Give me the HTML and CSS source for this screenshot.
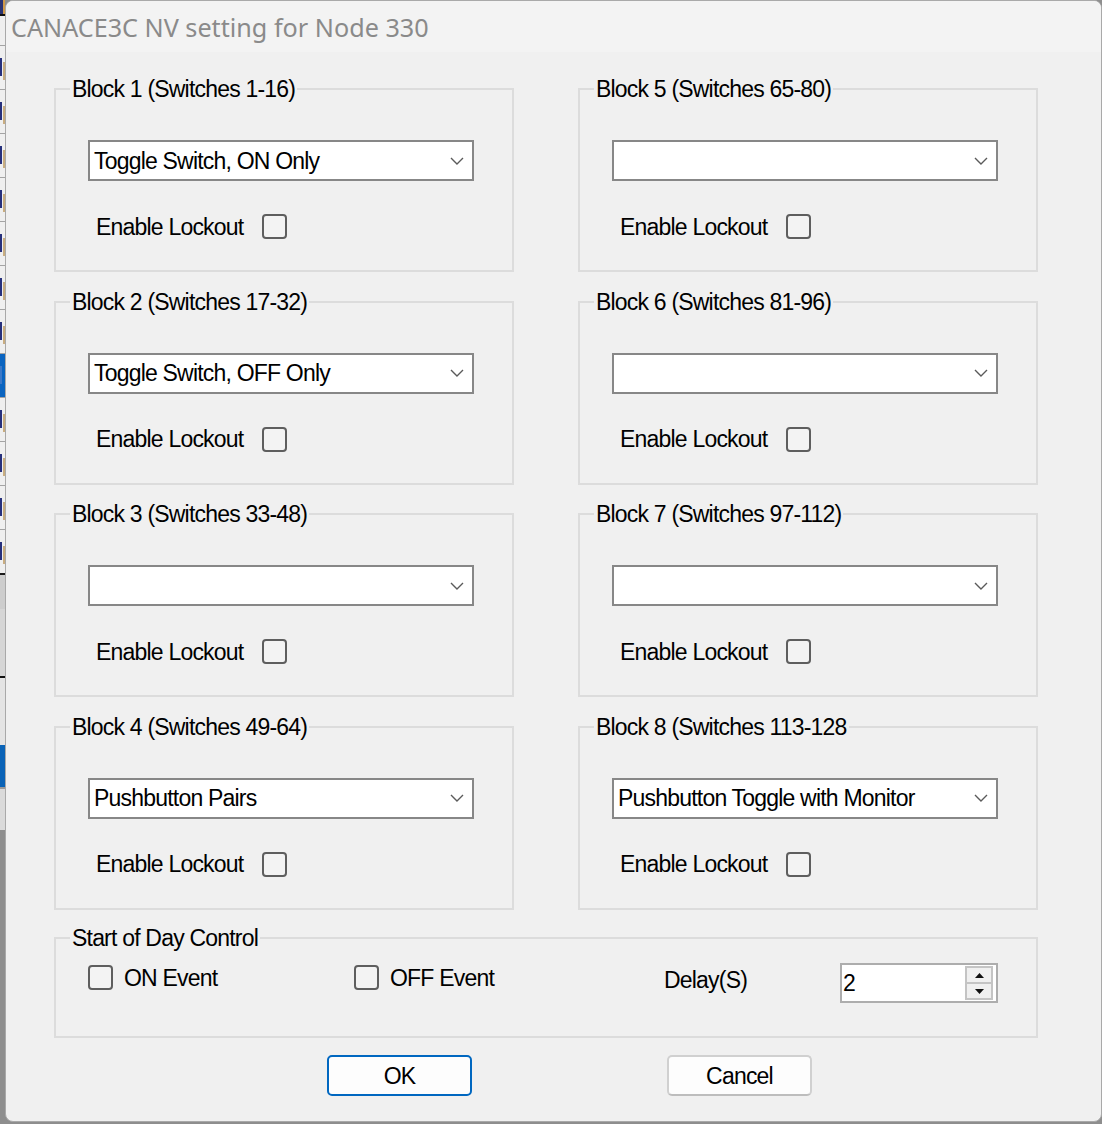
FILE: index.html
```html
<!DOCTYPE html>
<html lang="en">
<head>
<meta charset="utf-8">
<title>CANACE3C NV setting for Node 330</title>
<link rel="stylesheet" href="styles.css">
</head>
<body>
<div class="desktop">
  <div class="strip">
    <div class="s-top"></div>
    <div class="s-row"><span class="mark"></span></div>
    <div class="s-row"><span class="mark"></span></div>
    <div class="s-row"><span class="mark"></span></div>
    <div class="s-row"><span class="mark"></span></div>
    <div class="s-row"><span class="mark"></span></div>
    <div class="s-row"><span class="mark"></span></div>
    <div class="s-row"><span class="mark"></span></div>
    <div class="s-row sel"><span class="mark"></span></div>
    <div class="s-row"><span class="mark"></span></div>
    <div class="s-row"><span class="mark"></span></div>
    <div class="s-row"><span class="mark"></span></div>
    <div class="s-row"><span class="mark"></span></div>
    <div class="s-a"></div>
    <div class="s-b"></div>
    <div class="s-c"></div>
    <div class="s-d"></div>
    <div class="s-e"></div>
    <div class="s-rest"></div>
  </div>
  <div class="window">
    <div class="titlebar"><span class="title">CANACE3C NV setting for Node 330</span></div>
    <div class="content">
      <div class="blocks">
        <fieldset class="group block">
          <legend>Block 1 (Switches 1-16)</legend>
          <div class="combo"><span class="combo-text">Toggle Switch, ON Only</span><svg class="chev" width="14" height="8" viewBox="0 0 14 8"><path d="M1 1 L7 7 L13 1" fill="none" stroke="#5a5a5a" stroke-width="1.4"/></svg></div>
          <div class="lock"><span class="lock-text">Enable Lockout</span><span class="check"></span></div>
        </fieldset>
        <fieldset class="group block">
          <legend>Block 2 (Switches 17-32)</legend>
          <div class="combo"><span class="combo-text">Toggle Switch, OFF Only</span><svg class="chev" width="14" height="8" viewBox="0 0 14 8"><path d="M1 1 L7 7 L13 1" fill="none" stroke="#5a5a5a" stroke-width="1.4"/></svg></div>
          <div class="lock"><span class="lock-text">Enable Lockout</span><span class="check"></span></div>
        </fieldset>
        <fieldset class="group block">
          <legend>Block 3 (Switches 33-48)</legend>
          <div class="combo"><span class="combo-text"></span><svg class="chev" width="14" height="8" viewBox="0 0 14 8"><path d="M1 1 L7 7 L13 1" fill="none" stroke="#5a5a5a" stroke-width="1.4"/></svg></div>
          <div class="lock"><span class="lock-text">Enable Lockout</span><span class="check"></span></div>
        </fieldset>
        <fieldset class="group block">
          <legend>Block 4 (Switches 49-64)</legend>
          <div class="combo"><span class="combo-text">Pushbutton Pairs</span><svg class="chev" width="14" height="8" viewBox="0 0 14 8"><path d="M1 1 L7 7 L13 1" fill="none" stroke="#5a5a5a" stroke-width="1.4"/></svg></div>
          <div class="lock"><span class="lock-text">Enable Lockout</span><span class="check"></span></div>
        </fieldset>
        <fieldset class="group block">
          <legend>Block 5 (Switches 65-80)</legend>
          <div class="combo"><span class="combo-text"></span><svg class="chev" width="14" height="8" viewBox="0 0 14 8"><path d="M1 1 L7 7 L13 1" fill="none" stroke="#5a5a5a" stroke-width="1.4"/></svg></div>
          <div class="lock"><span class="lock-text">Enable Lockout</span><span class="check"></span></div>
        </fieldset>
        <fieldset class="group block">
          <legend>Block 6 (Switches 81-96)</legend>
          <div class="combo"><span class="combo-text"></span><svg class="chev" width="14" height="8" viewBox="0 0 14 8"><path d="M1 1 L7 7 L13 1" fill="none" stroke="#5a5a5a" stroke-width="1.4"/></svg></div>
          <div class="lock"><span class="lock-text">Enable Lockout</span><span class="check"></span></div>
        </fieldset>
        <fieldset class="group block">
          <legend>Block 7 (Switches 97-112)</legend>
          <div class="combo"><span class="combo-text"></span><svg class="chev" width="14" height="8" viewBox="0 0 14 8"><path d="M1 1 L7 7 L13 1" fill="none" stroke="#5a5a5a" stroke-width="1.4"/></svg></div>
          <div class="lock"><span class="lock-text">Enable Lockout</span><span class="check"></span></div>
        </fieldset>
        <fieldset class="group block">
          <legend>Block 8 (Switches 113-128</legend>
          <div class="combo"><span class="combo-text">Pushbutton Toggle with Monitor</span><svg class="chev" width="14" height="8" viewBox="0 0 14 8"><path d="M1 1 L7 7 L13 1" fill="none" stroke="#5a5a5a" stroke-width="1.4"/></svg></div>
          <div class="lock"><span class="lock-text">Enable Lockout</span><span class="check"></span></div>
        </fieldset>
      </div>
      <fieldset class="group sod">
        <legend>Start of Day Control</legend>
        <div class="sod-row">
          <div class="sod-opt sod-on"><span class="check"></span><span class="opt-text">ON Event</span></div>
          <div class="sod-opt sod-off"><span class="check"></span><span class="opt-text">OFF Event</span></div>
          <span class="delay-label">Delay(S)</span>
          <div class="spin">
            <span class="spin-value">2</span>
            <div class="spin-btns">
              <span class="spin-btn"><svg width="9" height="5" viewBox="0 0 9 5"><path d="M0 5 L4.5 0 L9 5 Z" fill="#111"/></svg></span>
              <span class="spin-btn spin-down"><svg width="9" height="5" viewBox="0 0 9 5"><path d="M0 0 L9 0 L4.5 5 Z" fill="#111"/></svg></span>
            </div>
          </div>
        </div>
      </fieldset>
      <div class="actions">
        <button class="btn btn-ok" type="button">OK</button>
        <button class="btn btn-cancel" type="button">Cancel</button>
      </div>
    </div>
  </div>
</div>
</body>
</html>
```

FILE: styles.css
```css
* { box-sizing: border-box; }

html, body {
  margin: 0;
  padding: 0;
}

body {
  width: 1102px;
  height: 1124px;
  overflow: hidden;
  font-family: "Liberation Sans", Arial, sans-serif;
  font-size: 23px;
  line-height: 24px;
  letter-spacing: -0.8px;
  color: #000;
}

.desktop {
  display: flex;
  width: 1102px;
  height: 1124px;
  background: #8e8e8e;
}

/* background application strip on the left */
.strip {
  flex: 0 0 5px;
  display: flex;
  flex-direction: column;
  background: #efefef;
}
.s-top {
  height: 45px;
  background:
    linear-gradient(to bottom, transparent 0 14px, #111 14px 16px, transparent 16px),
    linear-gradient(to right, #2a3372 0 3px, #d09a4a 3px 5px);
  background-size: 100% 100%, 100% 14px;
  background-repeat: no-repeat;
}
.s-row {
  height: 44px;
  border-top: 1px solid #a3a3a3;
  display: flex;
}
.s-row.sel { background: #0a64c0; }
.mark {
  width: 2px;
  height: 18px;
  margin-top: 12px;
  background: #27307c;
  box-shadow: 3px 4px 0 0 #c9ad80;
}
.s-row.sel .mark { background: #3a78c8; box-shadow: none; }
.s-a { height: 36px; background: #cdcdcd; border-top: 2px solid #1a1a1a; }
.s-b { height: 67px; background: #d6d6d6; }
.s-c { height: 69px; background: #e4e4e4; border-top: 2px solid #111; }
.s-d { height: 42px; background: #0a63b7; }
.s-e { height: 43px; background: #dadada; border-top: 2px solid #9a9a9a; }
.s-rest { flex: 1; background: #8e8e8e; }

/* dialog window */
.window {
  flex: 0 0 1097px;
  height: 1122px;
  display: flex;
  flex-direction: column;
  background: #f0f0f0;
  border: 1px solid #a9a9a9;
  border-radius: 8px;
  overflow: hidden;
}

.titlebar {
  height: 51px;
  flex: 0 0 51px;
  display: flex;
  align-items: center;
  padding-left: 5px;
  background: #f3f3f3;
}
.title {
  font-family: "Noto Sans", "Open Sans", sans-serif;
  font-size: 25.2px;
  line-height: 30px;
  letter-spacing: 0;
  color: #8a8a8a;
}

.content {
  padding: 25px 0 0 48px;
}

.blocks {
  display: grid;
  grid-template-columns: 460px 460px;
  grid-template-rows: repeat(4, auto);
  grid-auto-flow: column;
  column-gap: 64px;
  row-gap: 17.5px;
}

.group {
  margin: 0;
  padding: 0 0 31px 0;
  min-width: 0;
  border: 2px solid #dcdcdc;
}
.group legend {
  margin-left: 14px;
  padding: 0 2px;
  line-height: 24px;
}

.combo {
  display: flex;
  align-items: center;
  width: 386px;
  height: 41px;
  margin: 39px 0 0 32px;
  padding: 0 8px 0 4px;
  background: #fff;
  border: 2px solid #878787;
}
.combo-text {
  flex: 1;
  white-space: nowrap;
}
.chev { flex: 0 0 auto; }

.lock {
  display: flex;
  align-items: center;
  margin-top: 33px;
  padding-left: 40px;
}
.lock-text {
  width: 166px;
}

.check {
  display: block;
  flex: 0 0 25px;
  width: 25px;
  height: 25px;
  border: 2px solid #5e5e5e;
  border-radius: 4px;
  background: #f3f3f3;
}

/* start of day */
.sod {
  margin-top: 16.5px;
  width: 984px;
  padding-bottom: 33px;
}
.sod-row {
  display: flex;
  align-items: flex-start;
  margin: 13px 0 0 32px;
}
.sod-opt {
  display: flex;
  align-items: center;
  gap: 11px;
  margin-top: 2px;
}
.sod-on { width: 266px; }
.sod-off { width: 310px; }
.delay-label {
  width: 176px;
  margin-top: 5px;
}
.spin {
  display: flex;
  width: 158px;
  height: 40px;
  background: #fff;
  border: 2px solid #adadad;
}
.spin-value {
  flex: 1;
  padding: 6px 0 0 1px;
}
.spin-btns {
  display: flex;
  flex-direction: column;
  width: 28px;
  margin: 1px 3px 1px 0;
  border: 2px solid #c4c4c4;
  background: #f0f0f0;
}
.spin-btn {
  flex: 1;
  display: flex;
  align-items: center;
  justify-content: center;
}
.spin-down { border-top: 2px solid #c4c4c4; }

/* buttons */
.actions {
  display: flex;
  gap: 195px;
  margin-top: 17px;
  padding-left: 273px;
}
.btn {
  width: 145px;
  height: 41px;
  padding: 0;
  font: inherit;
  letter-spacing: -0.8px;
  color: #000;
  background: #fdfdfd;
  border-radius: 5px;
}
.btn-ok { border: 2px solid #0067c0; }
.btn-cancel {
  border: 2px solid #d0d0d0;
  border-bottom-color: #bdbdbd;
}
```
